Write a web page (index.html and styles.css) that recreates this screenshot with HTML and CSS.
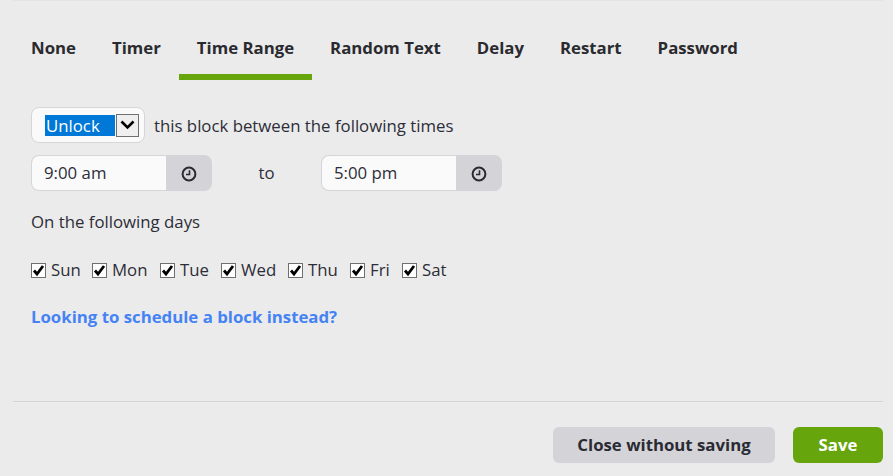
FILE: index.html
```html
<!DOCTYPE html>
<html lang="en">
<head>
  <meta charset="UTF-8">
  <meta name="viewport" content="width=device-width, initial-scale=1.0">
  <title>Block Options</title>
  <link rel="stylesheet" href="styles.css">
</head>
<body>

<div class="dialog">
  <!-- Tabs -->
  <div class="tabs">
    <a class="tab">None</a>
    <a class="tab">Timer</a>
    <a class="tab active">Time Range</a>
    <a class="tab">Random Text</a>
    <a class="tab">Delay</a>
    <a class="tab">Restart</a>
    <a class="tab">Password</a>
  </div>

  <div class="content">
    <div class="row action-row">
      <div class="select-box">
        <span class="select-value">Unlock</span>
        <span class="select-arrow">
          <svg width="15" height="10" viewBox="0 0 15 10"><path d="M1.5 1.5 7.5 7.5l6-6" fill="none" stroke="#000" stroke-width="2.6"/></svg>
        </span>
      </div>
      <span>this block between the following times</span>
    </div>

    <div class="row time-row">
      <div class="time-input">
        <span class="time-value">9:00 am</span>
        <span class="time-btn">
          <svg width="16" height="16" viewBox="0 0 16 16"><circle cx="8" cy="8" r="6.4" fill="none" stroke="#2a2a33" stroke-width="2"/><path d="M8.5 4.2v4.3H5" fill="none" stroke="#2a2a33" stroke-width="1.6"/></svg>
        </span>
      </div>
      <span class="to">to</span>
      <div class="time-input">
        <span class="time-value">5:00 pm</span>
        <span class="time-btn">
          <svg width="16" height="16" viewBox="0 0 16 16"><circle cx="8" cy="8" r="6.4" fill="none" stroke="#2a2a33" stroke-width="2"/><path d="M8.5 4.2v4.3H5" fill="none" stroke="#2a2a33" stroke-width="1.6"/></svg>
        </span>
      </div>
    </div>

    <p class="days-label">On the following days</p>

    <div class="days">
      <label class="day"><span class="check"><svg width="13" height="13" viewBox="0 0 13 13"><path d="M2 6.5 5 10l6-8" fill="none" stroke="#000" stroke-width="2.8"/></svg></span>Sun</label>
      <label class="day"><span class="check"><svg width="13" height="13" viewBox="0 0 13 13"><path d="M2 6.5 5 10l6-8" fill="none" stroke="#000" stroke-width="2.8"/></svg></span>Mon</label>
      <label class="day"><span class="check"><svg width="13" height="13" viewBox="0 0 13 13"><path d="M2 6.5 5 10l6-8" fill="none" stroke="#000" stroke-width="2.8"/></svg></span>Tue</label>
      <label class="day"><span class="check"><svg width="13" height="13" viewBox="0 0 13 13"><path d="M2 6.5 5 10l6-8" fill="none" stroke="#000" stroke-width="2.8"/></svg></span>Wed</label>
      <label class="day"><span class="check"><svg width="13" height="13" viewBox="0 0 13 13"><path d="M2 6.5 5 10l6-8" fill="none" stroke="#000" stroke-width="2.8"/></svg></span>Thu</label>
      <label class="day"><span class="check"><svg width="13" height="13" viewBox="0 0 13 13"><path d="M2 6.5 5 10l6-8" fill="none" stroke="#000" stroke-width="2.8"/></svg></span>Fri</label>
      <label class="day"><span class="check"><svg width="13" height="13" viewBox="0 0 13 13"><path d="M2 6.5 5 10l6-8" fill="none" stroke="#000" stroke-width="2.8"/></svg></span>Sat</label>
    </div>

    <a class="schedule-link">Looking to schedule a block instead?</a>
  </div>

  <div class="footer">
    <button class="btn btn-close">Close without saving</button>
    <button class="btn btn-save">Save</button>
  </div>
</div>

</body>
</html>
```

FILE: styles.css
```css
body {
  font-family: 'Open Sans', sans-serif;
  margin: 0;
  padding: 0;
  overflow: hidden;
  background-color: #ebebeb;
  color: #2d2d38;
  font-size: 16.8px;
}

.dialog {
  height: 476px;
  margin: 0 10px 0 13px;
  border-top: 1px solid #e4e4e6;
  box-sizing: border-box;
  display: flex;
  flex-direction: column;
}

.tabs {
  display: flex;
  margin-top: 24px;
}

.tab {
  padding: 11px 18px 15px;
  font-size: 16.8px;
  line-height: 23px;
  font-weight: 700;
  color: #2a2a2f;
  border-bottom: 6px solid transparent;
}

.tab.active {
  border-bottom-color: #67a50d;
}

.content {
  flex: 1;
  padding: 27px 18px 0;
}

.row {
  display: flex;
  align-items: center;
}

.select-box {
  width: 114px;
  height: 36px;
  box-sizing: border-box;
  border: 1px solid #d6d6da;
  border-radius: 8px;
  background-color: #fafafa;
  display: flex;
  align-items: center;
  padding-left: 13px;
  margin-right: 9px;
}

.select-value {
  width: 70px;
  height: 21px;
  line-height: 21px;
  padding-left: 1px;
  box-sizing: border-box;
  background-color: #0078d7;
  color: #fff;
}

.select-arrow {
  width: 23px;
  height: 23px;
  margin-left: 1px;
  box-sizing: border-box;
  border: 1px solid #6f6f6f;
  background-color: #efefef;
  display: flex;
  align-items: center;
  justify-content: center;
}

.time-row {
  margin-top: 12px;
}

.time-input {
  width: 181px;
  height: 36px;
  display: flex;
}

.time-value {
  flex: 1;
  box-sizing: border-box;
  border: 1px solid #d6d6da;
  border-right: none;
  border-radius: 8px 0 0 8px;
  background-color: #fafafa;
  padding-left: 12px;
  line-height: 33px;
}

.time-btn {
  width: 46px;
  box-sizing: border-box;
  padding-top: 2px;
  background-color: #d3d3d8;
  border-radius: 0 8px 8px 0;
  display: flex;
  align-items: center;
  justify-content: center;
}

.to {
  width: 109px;
  padding-bottom: 2px;
  text-align: center;
}

.days-label {
  margin: 20px 0 0;
  line-height: 22px;
}

.days {
  display: grid;
  grid-template-columns: 50px 57px 50px 56px 51px 41px auto;
  column-gap: 11px;
  justify-content: start;
  margin-top: 26px;
}

.day {
  display: flex;
  align-items: center;
  gap: 5px;
  line-height: 22px;
}

.check {
  width: 15px;
  height: 15px;
  box-sizing: border-box;
  border: 1px solid #6f6f6f;
  background-color: #fff;
  display: flex;
  align-items: center;
  justify-content: center;
}

.schedule-link {
  display: block;
  margin-top: 24px;
  font-weight: 700;
  line-height: 23px;
  color: #4583f5;
}

.footer {
  border-top: 1px solid #d4d4d8;
  display: flex;
  justify-content: flex-end;
  gap: 18px;
  padding: 25px 0 13px;
}

.btn {
  height: 36px;
  padding: 0 0 2px;
  border: none;
  border-radius: 6px;
  font-family: inherit;
  font-size: 16.8px;
  font-weight: 700;
}

.btn-close {
  width: 222px;
  background-color: #d3d3d8;
  color: #2a2a33;
}

.btn-save {
  width: 90px;
  background-color: #67a50d;
  color: #fff;
}
```
